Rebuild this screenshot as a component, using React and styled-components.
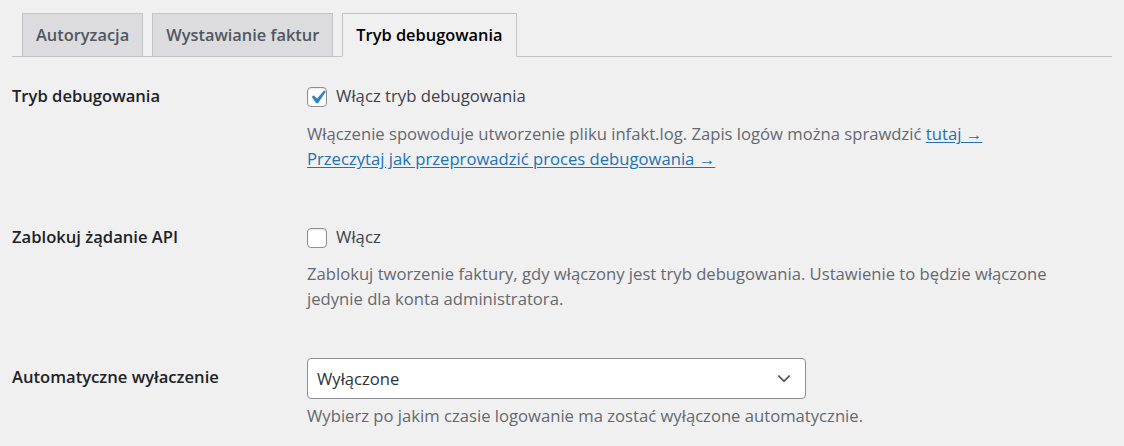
import React from 'react';
import styled, { createGlobalStyle } from 'styled-components';

const font = '"Open Sans", "Noto Sans", sans-serif';

const GlobalStyle = createGlobalStyle`
  html, body {
    margin: 0;
    padding: 0;
    background: #f0f0f1;
  }
  body {
    font-family: ${font};
    font-size: 16px;
    color: #3c434a;
  }
`;

const Page = styled.div`
  padding: 13px 12px 0;
`;

const TabBar = styled.nav`
  display: flex;
  align-items: flex-end;
  gap: 9px;
  padding-left: 10px;
  border-bottom: 1px solid #c3c4c7;
`;

const Tab = styled.a`
  display: block;
  height: 44px;
  box-sizing: border-box;
  margin-bottom: -1px;
  padding: 0 13px;
  line-height: 42px;
  font-size: 16.4px;
  font-weight: 600;
  text-decoration: none;
  border: 1px solid #c3c4c7;
  border-bottom-color: ${({ $active }) => ($active ? '#f0f0f1' : '#c3c4c7')};
  background: ${({ $active }) => ($active ? '#f0f0f1' : '#dcdcde')};
  color: ${({ $active }) => ($active ? '#000' : '#50575e')};
  white-space: nowrap;
`;

const Form = styled.div`
  padding-top: 26px;
  display: flex;
  flex-direction: column;
`;

const Row = styled.div`
  display: grid;
  grid-template-columns: 295px 1fr;
  align-items: start;
  margin-bottom: ${({ $space }) => $space || 0}px;
`;

const Label = styled.div`
  font-size: 16.6px;
  font-weight: 600;
  line-height: 25px;
  color: #1d2327;
  padding-top: ${({ $offset }) => $offset || 0}px;
`;

const Field = styled.div`
  display: flex;
  flex-direction: column;
`;

const CheckLine = styled.label`
  display: flex;
  align-items: center;
  gap: 9px;
  line-height: 25px;
  font-size: 16.7px;
  color: #3c434a;
`;

const Box = styled.span`
  position: relative;
  width: 20px;
  height: 20px;
  box-sizing: border-box;
  border: 1px solid #8c8f94;
  border-radius: 4px;
  background: #fff;
  box-shadow: inset 0 1px 2px rgba(0, 0, 0, 0.1);
  flex: none;
  margin-top: 2px;

  svg {
    position: absolute;
    left: -4px;
    top: -4px;
  }
`;

const Description = styled.p`
  margin: ${({ $top }) => $top || 0}px 0 0;
  font-size: 16.65px;
  line-height: 25px;
  color: #646970;
`;

const TextLink = styled.a`
  color: #2271b1;
  text-decoration: underline;
  text-underline-offset: 2px;
`;

const SelectBox = styled.div`
  position: relative;
  width: 499px;
  height: 41px;
  box-sizing: border-box;
  border: 1px solid #8c8f94;
  border-radius: 4px;
  background: #fff;
  display: flex;
  align-items: center;
  padding: 0 9px;
  font-size: 16.6px;
  color: #2c3338;

  svg {
    position: absolute;
    right: 11px;
    top: 50%;
    transform: translateY(-50%);
  }
`;

const Checkbox = ({ checked, children }) => (
  <CheckLine>
    <Box>
      {checked && (
        <svg width="27" height="27" viewBox="0 0 20 20">
          <path
            d="M14.83 4.89l1.34.94-5.81 8.38H9.02L5.78 9.67l1.34-1.25 2.57 2.4z"
            fill="#3582c4"
          />
        </svg>
      )}
    </Box>
    {children}
  </CheckLine>
);

const Select = ({ value }) => (
  <SelectBox>
    {value}
    <svg width="20" height="20" viewBox="0 0 20 20">
      <path d="M5 6l5 5 5-5 1.5 1-6.5 6.5-6.5-6.5 1.5-1z" fill="#50575e" />
    </svg>
  </SelectBox>
);

const App = () => {
  return (
    <Page>
      <GlobalStyle />
      <TabBar>
        <Tab>Autoryzacja</Tab>
        <Tab>Wystawianie faktur</Tab>
        <Tab $active>Tryb debugowania</Tab>
      </TabBar>

      <Form>
        <Row $space={53}>
          <Label>Tryb debugowania</Label>
          <Field>
            <Checkbox checked>Włącz tryb debugowania</Checkbox>
            <Description $top={13}>
              Włączenie spowoduje utworzenie pliku infakt.log. Zapis logów można sprawdzić{' '}
              <TextLink>tutaj →</TextLink>
              <br />
              <TextLink>Przeczytaj jak przeprowadzić proces debugowania →</TextLink>
            </Description>
          </Field>
        </Row>

        <Row $space={47}>
          <Label>Zablokuj żądanie API</Label>
          <Field>
            <Checkbox>Włącz</Checkbox>
            <Description $top={12}>
              Zablokuj tworzenie faktury, gdy włączony jest tryb debugowania. Ustawienie to będzie włączone
              <br />
              jedynie dla konta administratora.
            </Description>
          </Field>
        </Row>

        <Row>
          <Label $offset={6}>Automatyczne wyłaczenie</Label>
          <Field>
            <Select value="Wyłączone" />
            <Description $top={4}>
              Wybierz po jakim czasie logowanie ma zostać wyłączone automatycznie.
            </Description>
          </Field>
        </Row>
      </Form>
    </Page>
  );
};

export default App;
